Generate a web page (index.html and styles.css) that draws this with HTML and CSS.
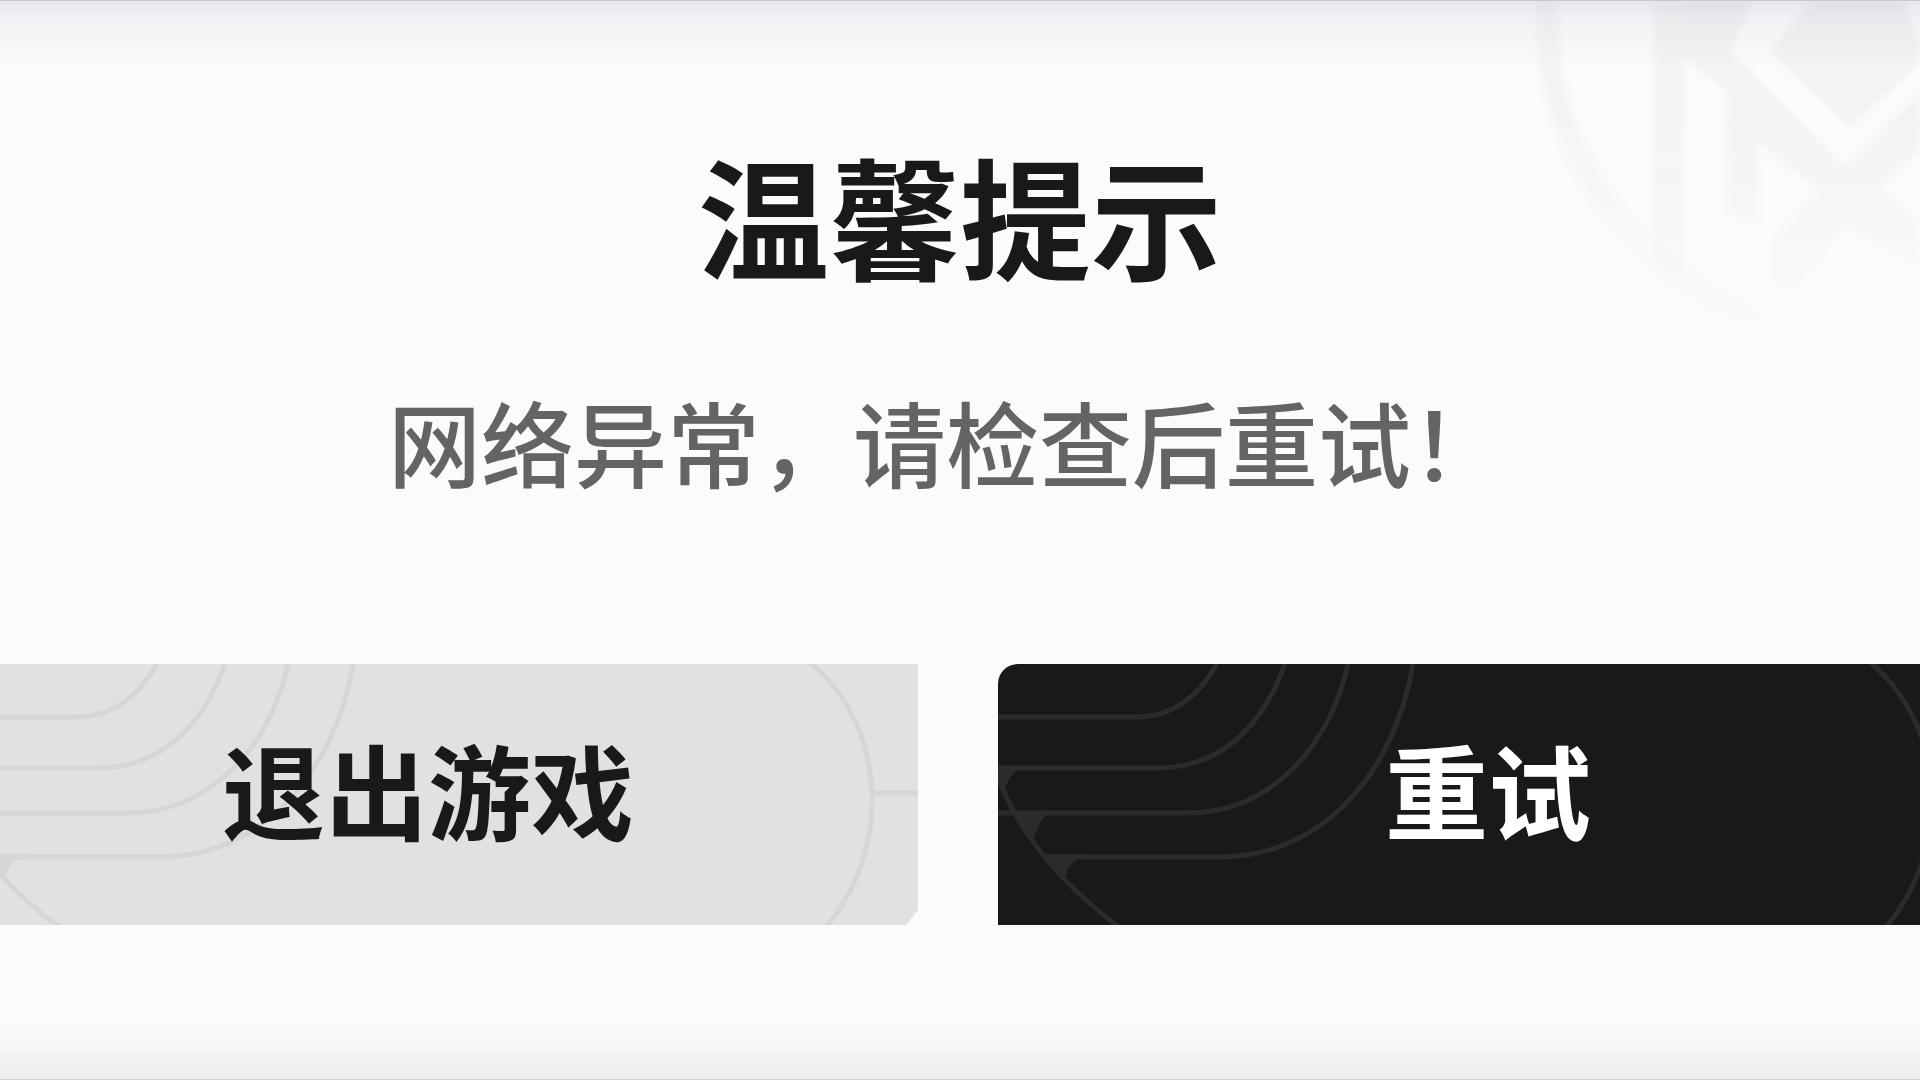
FILE: index.html
```html
<!DOCTYPE html>
<html lang="zh-CN">
<head>
    <meta charset="UTF-8">
    <meta name="viewport" content="width=device-width, initial-scale=1.0">
    <title>温馨提示</title>
    <link rel="stylesheet" href="styles.css">
</head>
<body>
    <!-- line pattern shared by both buttons -->
    <svg class="defs" width="0" height="0" aria-hidden="true">
        <symbol id="pattern" viewBox="0 0 980 261">
            <g fill="none" stroke="currentColor" stroke-width="5">
                <path d="M0 53H139C172 53 200 34 219 0"/>
                <path d="M0 104H159C222 104 264 64 287 0"/>
                <path d="M0 149H189C272 149 331 84 350 0"/>
                <path d="M48 193H222C322 193 396 112 415 0"/>
                <path d="M2 118C20 165 58 216 121 263"/>
                <path d="M872 -2C952 66 952 188 888 263"/>
                <path d="M932 129H980"/>
            </g>
            <g fill="currentColor">
                <path d="M0 102H28C17 106 10 114 6 127L0 117Z"/>
                <path d="M16 147H52C44 154 40 162 36 175L24 161Z"/>
                <path d="M45 190H92C76 195 70 201 67 214L56 204Z"/>
            </g>
        </symbol>
    </svg>

    <main class="dialog" role="alertdialog" aria-labelledby="title" aria-describedby="message">
        <svg class="emblem" width="420" height="360" viewBox="0 0 420 360" aria-hidden="true">
            <path class="ring" d="M48 -10C40 110 90 245 260 322"/>
            <path class="bar" d="M153 0H184V280L153 262Z"/>
            <path class="shade" d="M184 0H254L230 50L345 165L420 92V150L382 188L420 225V262L345 226L297 282H272V240L318 190L258 142V223L228 212V90L184 58Z"/>
            <path class="shade" d="M310 0H405L420 45V62L350 127L270 50Z"/>
        </svg>

        <h1 class="title" id="title">温馨提示</h1>
        <p class="message" id="message">网络异常，请检查后重试！</p>

        <div class="actions">
            <button class="btn quit" type="button">
                <svg class="lines" aria-hidden="true"><use href="#pattern"/></svg>
                <span>退出游戏</span>
            </button>
            <button class="btn retry" type="button">
                <svg class="lines" aria-hidden="true"><use href="#pattern"/></svg>
                <span>重试</span>
            </button>
        </div>
    </main>
</body>
</html>
```
FILE: styles.css
```css
* {
    box-sizing: border-box;
}
body {
    margin: 0;
    font-family: "Noto Sans CJK SC", sans-serif;
    background-color: #fbfbfb;
}
.defs {
    position: absolute;
}
.dialog {
    position: relative;
    min-height: 100vh;
    padding-top: 146px;
    overflow: hidden;
    border-top: 1px solid #c6c6cc;
    border-bottom: 1px solid #d0d2d1;
    background:
        linear-gradient(to bottom, #e9e8ee 0, #f0eff5 14px, #f4f5f6 30px, #f5f9f6 48px, rgba(251,251,251,0) 68px),
        linear-gradient(to top, #ededed 0, #f2f2f2 24px, #f8f8f8 36px, #fbfbfb 58px);
}
/* fades out towards the bottom */
.emblem {
    position: absolute;
    top: 0;
    right: 0;
    filter: blur(3px);
    mask-image: linear-gradient(to bottom, #000 30%, transparent 95%);
}
.emblem .ring {
    fill: none;
    stroke: rgba(0,0,0,0.025);
    stroke-width: 24px;
}
.emblem .bar {
    fill: rgba(60,0,10,0.03);
}
.emblem .shade {
    fill: rgba(0,0,0,0.03);
}
.title {
    margin: 0;
    font-size: 131px;
    font-weight: 700;
    line-height: 132px;
    text-align: center;
    color: #191919;
}
.message {
    margin: 116px 0 0;
    padding-right: 28px;
    font-size: 93px;
    font-weight: 500;
    line-height: 92px;
    text-align: center;
    color: #666462;
}
/* the row runs past both sides of the window */
.actions {
    display: grid;
    grid-template-columns: 1fr 1fr;
    gap: 80px;
    margin: 177px -58px 0 -62px;
}
.btn {
    position: relative;
    height: 261px;
    padding: 0 0 12px;
    border: none;
    overflow: hidden;
    font-family: inherit;
    font-size: 103px;
    font-weight: 700;
    line-height: 103px;
    cursor: pointer;
}
.btn span {
    position: relative;
}
.lines {
    position: absolute;
    top: 0;
    left: 0;
    width: 100%;
    height: 261px;
}
.quit {
    background-color: #e1e1e1;
    color: #191919;
    clip-path: polygon(0 0, 100% 0, 100% calc(100% - 15px), calc(100% - 12px) 100%, 0 100%);
}
.quit .lines {
    color: #d6d6d6;
}
.retry {
    background-color: #191919;
    color: #fff;
    border-top-left-radius: 20px;
}
.retry .lines {
    color: #2b2b2b;
}
```
